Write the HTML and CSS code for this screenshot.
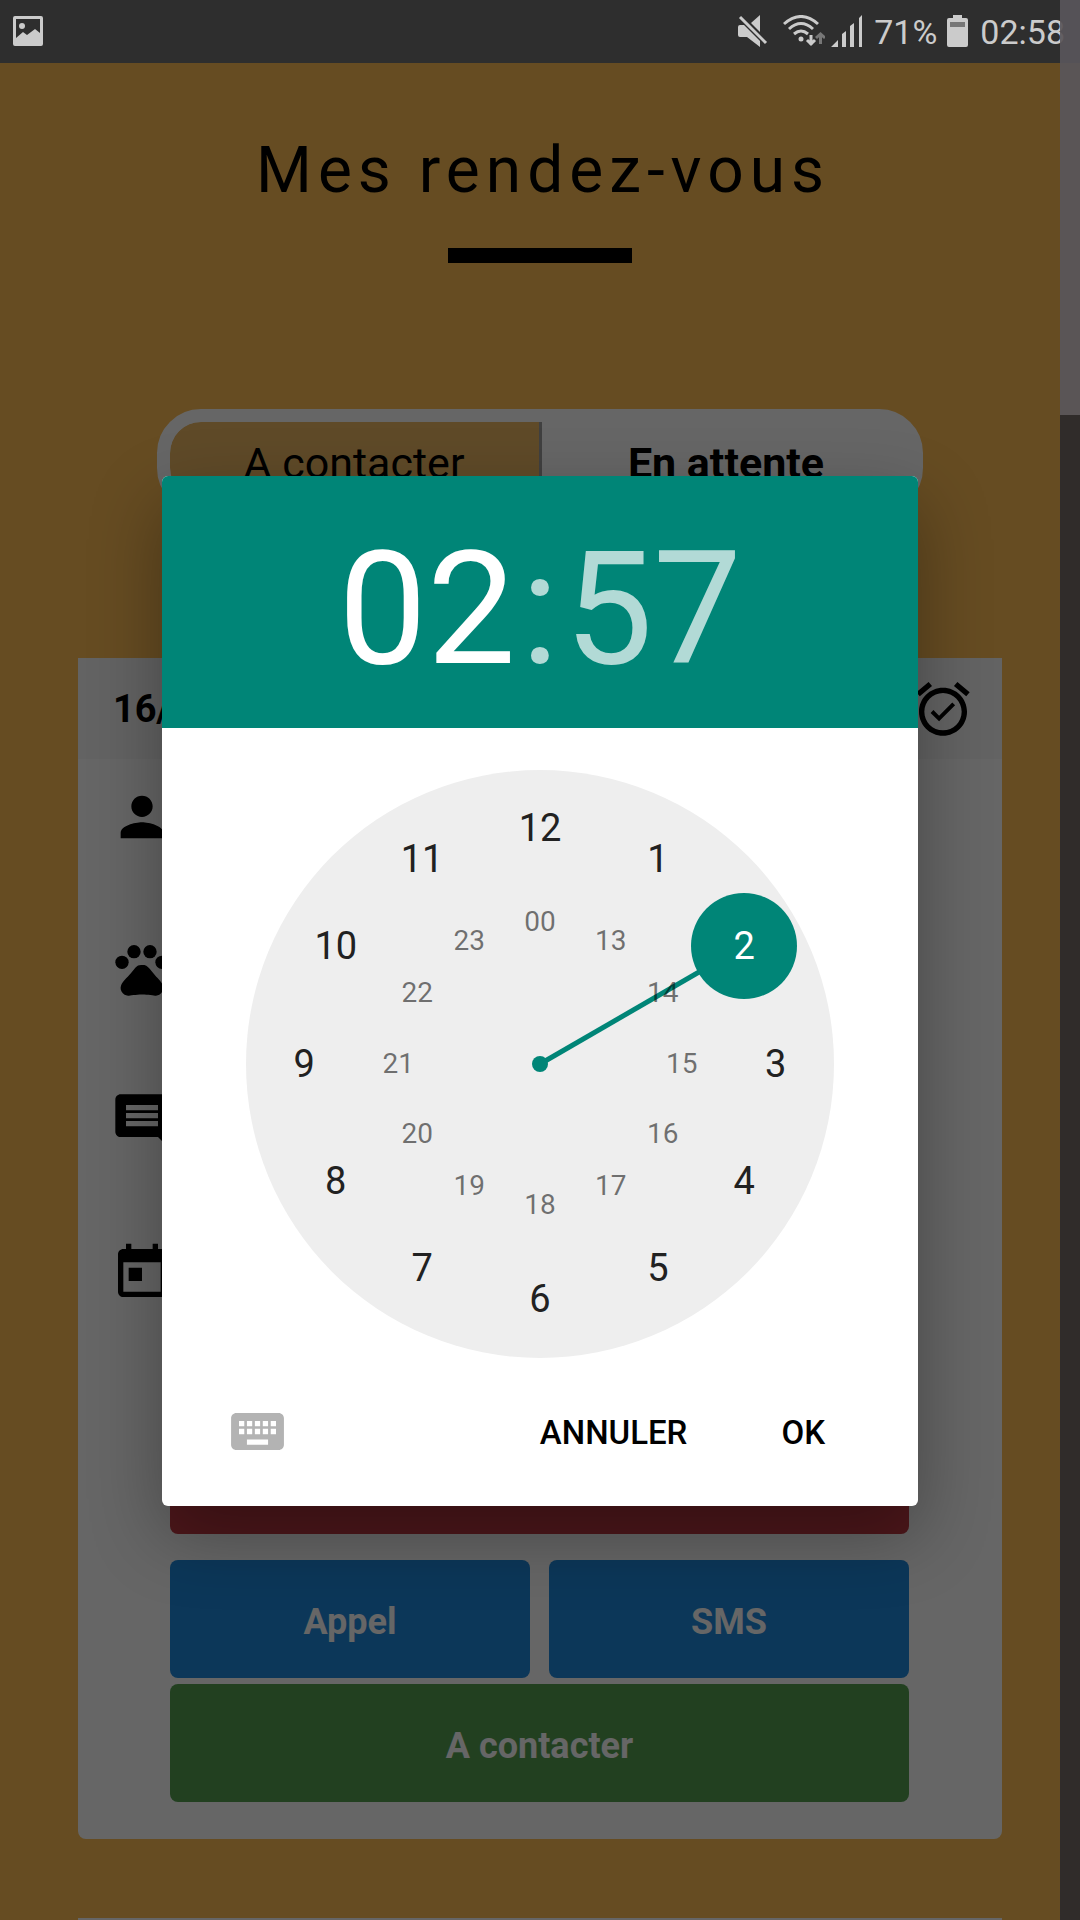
FILE: index.html
```html
<!DOCTYPE html>
<html lang="fr">
<head>
<meta charset="utf-8">
<meta name="viewport" content="width=device-width, initial-scale=1">
<title>Mes rendez-vous</title>
<link rel="stylesheet" href="styles.css">
</head>
<body>
<div class="app">
  <header class="status">
    <svg class="status-icon" viewBox="0 0 30 30" width="30" height="30" aria-hidden="true"><path fill-rule="evenodd" d="M2 0h26a2 2 0 0 1 2 2v26a2 2 0 0 1-2 2H2a2 2 0 0 1-2-2V2a2 2 0 0 1 2-2zM3 3v19l7-6 4 3 8-6 5 4V3z"/><circle cx="9" cy="10" r="3"/></svg>
    <div class="status-right">
      <svg class="icon-mute" viewBox="0 0 30 32" width="30" height="32" aria-hidden="true"><path d="M0 12q0-2 2-2h4l16 16v6L9 22H2q-2 0-2-2zM13 8l9-8v17z"/><path d="M2 2l26 26" fill="none" stroke="currentColor" stroke-width="3"/></svg>
      <svg class="icon-wifi" viewBox="0 0 42 32" width="42" height="32" aria-hidden="true"><g fill="none" stroke="currentColor" stroke-width="3"><path d="M1 9q17-15 34 0M6 14q12-11 24 0M11 19q7-6 14 0"/><path d="M28 20v10M24 25l4 4 4-4"/><path class="dim" d="M37.500 29V19M33 23l4.500-4 4.500 4"/></g><circle cx="18" cy="24" r="2.500"/></svg>
      <svg class="icon-signal" viewBox="0 0 32 32" width="32" height="32" aria-hidden="true"><path d="M0 32l7-7v7zM11 19l4-3v16h-4zM19 11l4-3v24h-4zM28 3l3-3v32h-3z"/></svg>
      <span class="percent">71%</span>
      <svg class="icon-battery" viewBox="0 0 21 32" width="21" height="32" aria-hidden="true"><path d="M6 0h9v3h4q2 0 2 2v25q0 2-2 2H2q-2 0-2-2V5q0-2 2-2h4z"/><path class="battery-empty" d="M3 7h15v5H3z"/></svg>
      <span class="time">02:58</span>
    </div>
  </header>

  <main class="screen">
    <div class="page">
      <h1 class="title">Mes rendez-vous</h1>
      <div class="rule"></div>

      <div class="tabs">
        <button class="tab" type="button">A contacter</button>
        <button class="tab tab-on" type="button">En attente</button>
      </div>

      <article class="card">
        <header class="card-head">
          <span>16/</span>
          <svg class="icon" viewBox="0 0 24 24" aria-hidden="true"><path d="M22 5.720l-4.600-3.860-1.290 1.530 4.600 3.860L22 5.720zM7.880 3.390L6.600 1.860 2 5.710l1.290 1.530 4.590-3.850zM12 4c-4.970 0-9 4.030-9 9s4.020 9 9 9c4.970 0 9-4.030 9-9s-4.030-9-9-9zm0 16c-3.870 0-7-3.130-7-7s3.130-7 7-7 7 3.130 7 7-3.130 7-7 7zm-1.460-5.470L8.410 12.400l-1.060 1.060 3.180 3.180 6-6-1.060-1.060-4.930 4.950z"/></svg>
        </header>
        <div class="details">
          <svg class="icon" viewBox="0 0 24 24" aria-hidden="true"><path d="M12 12c2.210 0 4-1.790 4-4s-1.790-4-4-4-4 1.790-4 4 1.790 4 4 4zm0 2c-2.670 0-8 1.340-8 4v2h16v-2c0-2.660-5.330-4-8-4z"/></svg>
          <svg class="icon" viewBox="0 0 24 24" aria-hidden="true"><circle cx="4.500" cy="9.500" r="2.500"/><circle cx="9" cy="5.500" r="2.500"/><circle cx="15" cy="5.500" r="2.500"/><circle cx="19.500" cy="9.500" r="2.500"/><path d="M17.340 14.860c-.870-1.020-1.600-1.890-2.480-2.910-.460-.540-1.050-1.080-1.750-1.320-.110-.040-.220-.070-.330-.090-.250-.040-.520-.040-.780-.040s-.530 0-.790.050c-.110.020-.220.050-.330.090-.700.240-1.280.780-1.750 1.320-.870 1.020-1.600 1.890-2.480 2.910-1.310 1.310-2.920 2.760-2.620 4.790.290 1.020 1.020 2.030 2.330 2.320.730.150 3.060-.440 5.540-.440h.180c2.480 0 4.810.580 5.540.440 1.310-.290 2.040-1.310 2.330-2.320.310-2.040-1.300-3.490-2.610-4.800z"/></svg>
          <svg class="icon" viewBox="0 0 24 24" aria-hidden="true"><path d="M21.990 4c0-1.100-.890-2-1.990-2H4c-1.100 0-2 .900-2 2v12c0 1.100.900 2 2 2h14l4 4-.010-18zM18 14H6v-2h12v2zm0-3H6V9h12v2zm0-3H6V6h12v2z"/></svg>
          <svg class="icon" viewBox="0 0 24 24" aria-hidden="true"><path d="M19 3h-1V1h-2v2H8V1H6v2H5c-1.110 0-1.990.900-1.990 2L3 19c0 1.100.890 2 2 2h14c1.100 0 2-.900 2-2V5c0-1.100-.900-2-2-2zm0 16H5V8h14v11zM7 10h5v5H7z"/></svg>
        </div>
        <div class="actions">
          <button class="btn btn-red" type="button" aria-label="Supprimer"></button>
          <div class="pair">
            <button class="btn btn-blue" type="button">Appel</button>
            <button class="btn btn-blue" type="button">SMS</button>
          </div>
          <button class="btn btn-green" type="button">A contacter</button>
        </div>
      </article>
      <article class="card card-next"></article>
    </div>

    <div class="scrim">
      <section class="dialog" role="dialog" aria-label="Heure">
        <div class="readout"><span class="hour">02</span><span class="colon">:</span><span>57</span></div>
        <div class="clock">
          <svg class="hand" viewBox="0 0 588 588" aria-hidden="true"><path d="M294 294L498 176" stroke="currentColor" stroke-width="5"/><circle cx="294" cy="294" r="8"/><circle cx="498" cy="176" r="53"/></svg>
          <button class="num" type="button" style="--h:12">12</button>
          <button class="num" type="button" style="--h:1">1</button>
          <button class="num num-on" type="button" style="--h:2">2</button>
          <button class="num" type="button" style="--h:3">3</button>
          <button class="num" type="button" style="--h:4">4</button>
          <button class="num" type="button" style="--h:5">5</button>
          <button class="num" type="button" style="--h:6">6</button>
          <button class="num" type="button" style="--h:7">7</button>
          <button class="num" type="button" style="--h:8">8</button>
          <button class="num" type="button" style="--h:9">9</button>
          <button class="num" type="button" style="--h:10">10</button>
          <button class="num" type="button" style="--h:11">11</button>
          <button class="num inner" type="button" style="--h:0">00</button>
          <button class="num inner" type="button" style="--h:1">13</button>
          <button class="num inner" type="button" style="--h:2">14</button>
          <button class="num inner" type="button" style="--h:3">15</button>
          <button class="num inner" type="button" style="--h:4">16</button>
          <button class="num inner" type="button" style="--h:5">17</button>
          <button class="num inner" type="button" style="--h:6">18</button>
          <button class="num inner" type="button" style="--h:7">19</button>
          <button class="num inner" type="button" style="--h:8">20</button>
          <button class="num inner" type="button" style="--h:9">21</button>
          <button class="num inner" type="button" style="--h:10">22</button>
          <button class="num inner" type="button" style="--h:11">23</button>
        </div>
        <footer class="dialog-foot">
          <button class="flat keyboard" type="button" aria-label="Clavier"><svg viewBox="2 5 20 14" width="53" height="37" aria-hidden="true"><path d="M20 5H4c-1.100 0-1.990.900-1.990 2L2 17c0 1.100.900 2 2 2h16c1.100 0 2-.900 2-2V7c0-1.100-.900-2-2-2zm-9 3h2v2h-2V8zm0 3h2v2h-2v-2zM8 8h2v2H8V8zm0 3h2v2H8v-2zm-1 2H5v-2h2v2zm0-3H5V8h2v2zm9 7H8v-2h8v2zm0-4h-2v-2h2v2zm0-3h-2V8h2v2zm3 3h-2v-2h2v2zm0-3h-2V8h2v2z"/></svg></button>
          <button class="flat" type="button">ANNULER</button>
          <button class="flat" type="button">OK</button>
        </footer>
      </section>
    </div>
  </main>
  <div class="scrollbar"><div class="thumb"></div></div>
</div>
</body>
</html>
```
FILE: styles.css
```css
* {
  box-sizing: border-box;
}

body {
  margin: 0;
  font-family: Roboto, "Liberation Sans", sans-serif;
  color: #000;
}

button {
  margin: 0;
  padding: 0;
  border: 0;
  background: none;
  color: inherit;
  font: inherit;
}

svg {
  display: block;
  fill: currentColor;
}

.app {
  position: relative;
  display: flex;
  flex-direction: column;
  height: 100vh;
  overflow: hidden;
}

/* Status bar */
.status {
  display: flex;
  flex: none;
  align-items: center;
  justify-content: space-between;
  height: 63px;
  padding: 0 15px 2px 13px;
  background: #2e2e2e;
  color: #cbcbcb;
  font-size: 34px;
  line-height: 40px;
}

.status-right {
  display: flex;
  align-items: center;
}

.icon-wifi {
  margin-left: 15px;
}

.icon-signal {
  margin-left: 6px;
}

.percent {
  margin-left: 11px;
}

.icon-battery {
  margin-left: 10px;
}

.time {
  margin-left: 12px;
}

.percent,
.time {
  padding-top: 3px;
}

.dim {
  stroke: #777;
}

.battery-empty {
  fill: #777;
}

/* Page under the dialog */
.screen {
  position: relative;
  flex: 1;
  overflow: hidden;
  background: #ffbe55;
}

.page {
  display: flex;
  flex-direction: column;
  align-items: center;
  padding: 71px 78px 0;
}

.title {
  margin: 0;
  padding-left: 6px;
  font-size: 64px;
  font-weight: 400;
  line-height: 74px;
  letter-spacing: 6px;
}

.rule {
  width: 184px;
  height: 15px;
  margin-top: 40px;
  background: #000;
}

.tabs {
  display: flex;
  width: 83%;
  height: 103px;
  margin-top: 146px;
  overflow: hidden;
  border: 13px solid #fff;
  border-radius: 44px;
  background: #fff;
}

.tab {
  flex: 1;
  padding-top: 4px;
  background: #eeb964;
  border-right: 3px solid #a0a0a0;
  border-radius: 31px 0 0 31px;
  font-size: 43px;
  line-height: 50px;
}

.tab-on {
  background: #fff;
  border: 0;
  border-radius: 0 31px 31px 0;
  font-weight: 700;
}

.card {
  width: 100%;
  margin-top: 146px;
  border-radius: 0 0 8px 8px;
  background: #fff;
}

.card-next {
  height: 200px;
  margin-top: 79px;
}

.card-head {
  display: flex;
  align-items: center;
  justify-content: space-between;
  height: 101px;
  padding: 0 27px 0 35px;
  background: #f7f7f7;
  font-size: 38px;
  font-weight: 700;
}

.icon {
  width: 64px;
  height: 64px;
}

.details {
  display: flex;
  flex-direction: column;
  gap: 88px;
  padding: 26px 32px 0;
}

.actions {
  display: flex;
  flex-direction: column;
  gap: 6px;
  padding: 111px 93px 37px 92px;
}

.btn {
  width: 100%;
  height: 118px;
  border-radius: 8px;
  padding-top: 6px;
  color: #fff;
  font-size: 36px;
  font-weight: 700;
}

.btn-red {
  margin-bottom: 20px;
  background: #c23b44;
}

.btn-blue {
  background: #1e8ade;
}

.btn-green {
  background: #55a052;
}

.pair {
  display: flex;
  gap: 19px;
}

/* Time picker */
.scrim {
  position: absolute;
  inset: 0;
  display: flex;
  align-items: center;
  justify-content: center;
  padding-bottom: 2px;
  background: rgba(0, 0, 0, 0.6);
}

.dialog {
  width: 70%;
  overflow: hidden;
  border-radius: 6px;
  background: #fff;
  box-shadow: 0 28px 72px rgba(0, 0, 0, 0.32);
}

.readout {
  display: flex;
  align-items: center;
  justify-content: center;
  height: 252px;
  padding-top: 14px;
  background: #008577;
  color: #b2dad6;
  font-size: 158px;
  line-height: 184px;
}

.hour {
  color: #fff;
}

.colon {
  margin: 0 5px;
}

.clock {
  position: relative;
  width: 588px;
  max-width: 100%;
  aspect-ratio: 1;
  margin: 42px auto 0;
  border-radius: 50%;
  background: #eee;
}

.hand {
  position: absolute;
  inset: 0;
  color: #008577;
}

.num {
  --r: 40.1%;
  position: absolute;
  left: calc(50% + var(--r) * sin(var(--h) * 30deg));
  top: calc(50% - var(--r) * cos(var(--h) * 30deg));
  transform: translate(-50%, -50%);
  color: #212121;
  font-size: 38px;
  line-height: 44px;
}

.num-on {
  color: #fff;
}

.inner {
  --r: 24.1%;
  color: rgba(0, 0, 0, 0.54);
  font-size: 28px;
  line-height: 34px;
}

.dialog-foot {
  display: flex;
  align-items: center;
  gap: 94px;
  height: 148px;
  padding: 0 93px 0 69px;
}

.flat {
  padding-top: 2px;
  font-size: 33px;
  font-weight: 500;
  line-height: 40px;
}

.keyboard {
  margin-right: auto;
  padding: 0;
  color: #b3b3b3;
}

/* Edge scrollbar */
.scrollbar {
  position: absolute;
  top: 0;
  right: 0;
  bottom: 0;
  width: 20px;
  background: linear-gradient(transparent 415px, #302c2a 415px);
}

.thumb {
  height: 415px;
  background: rgba(89, 86, 91, 0.92);
}
```
